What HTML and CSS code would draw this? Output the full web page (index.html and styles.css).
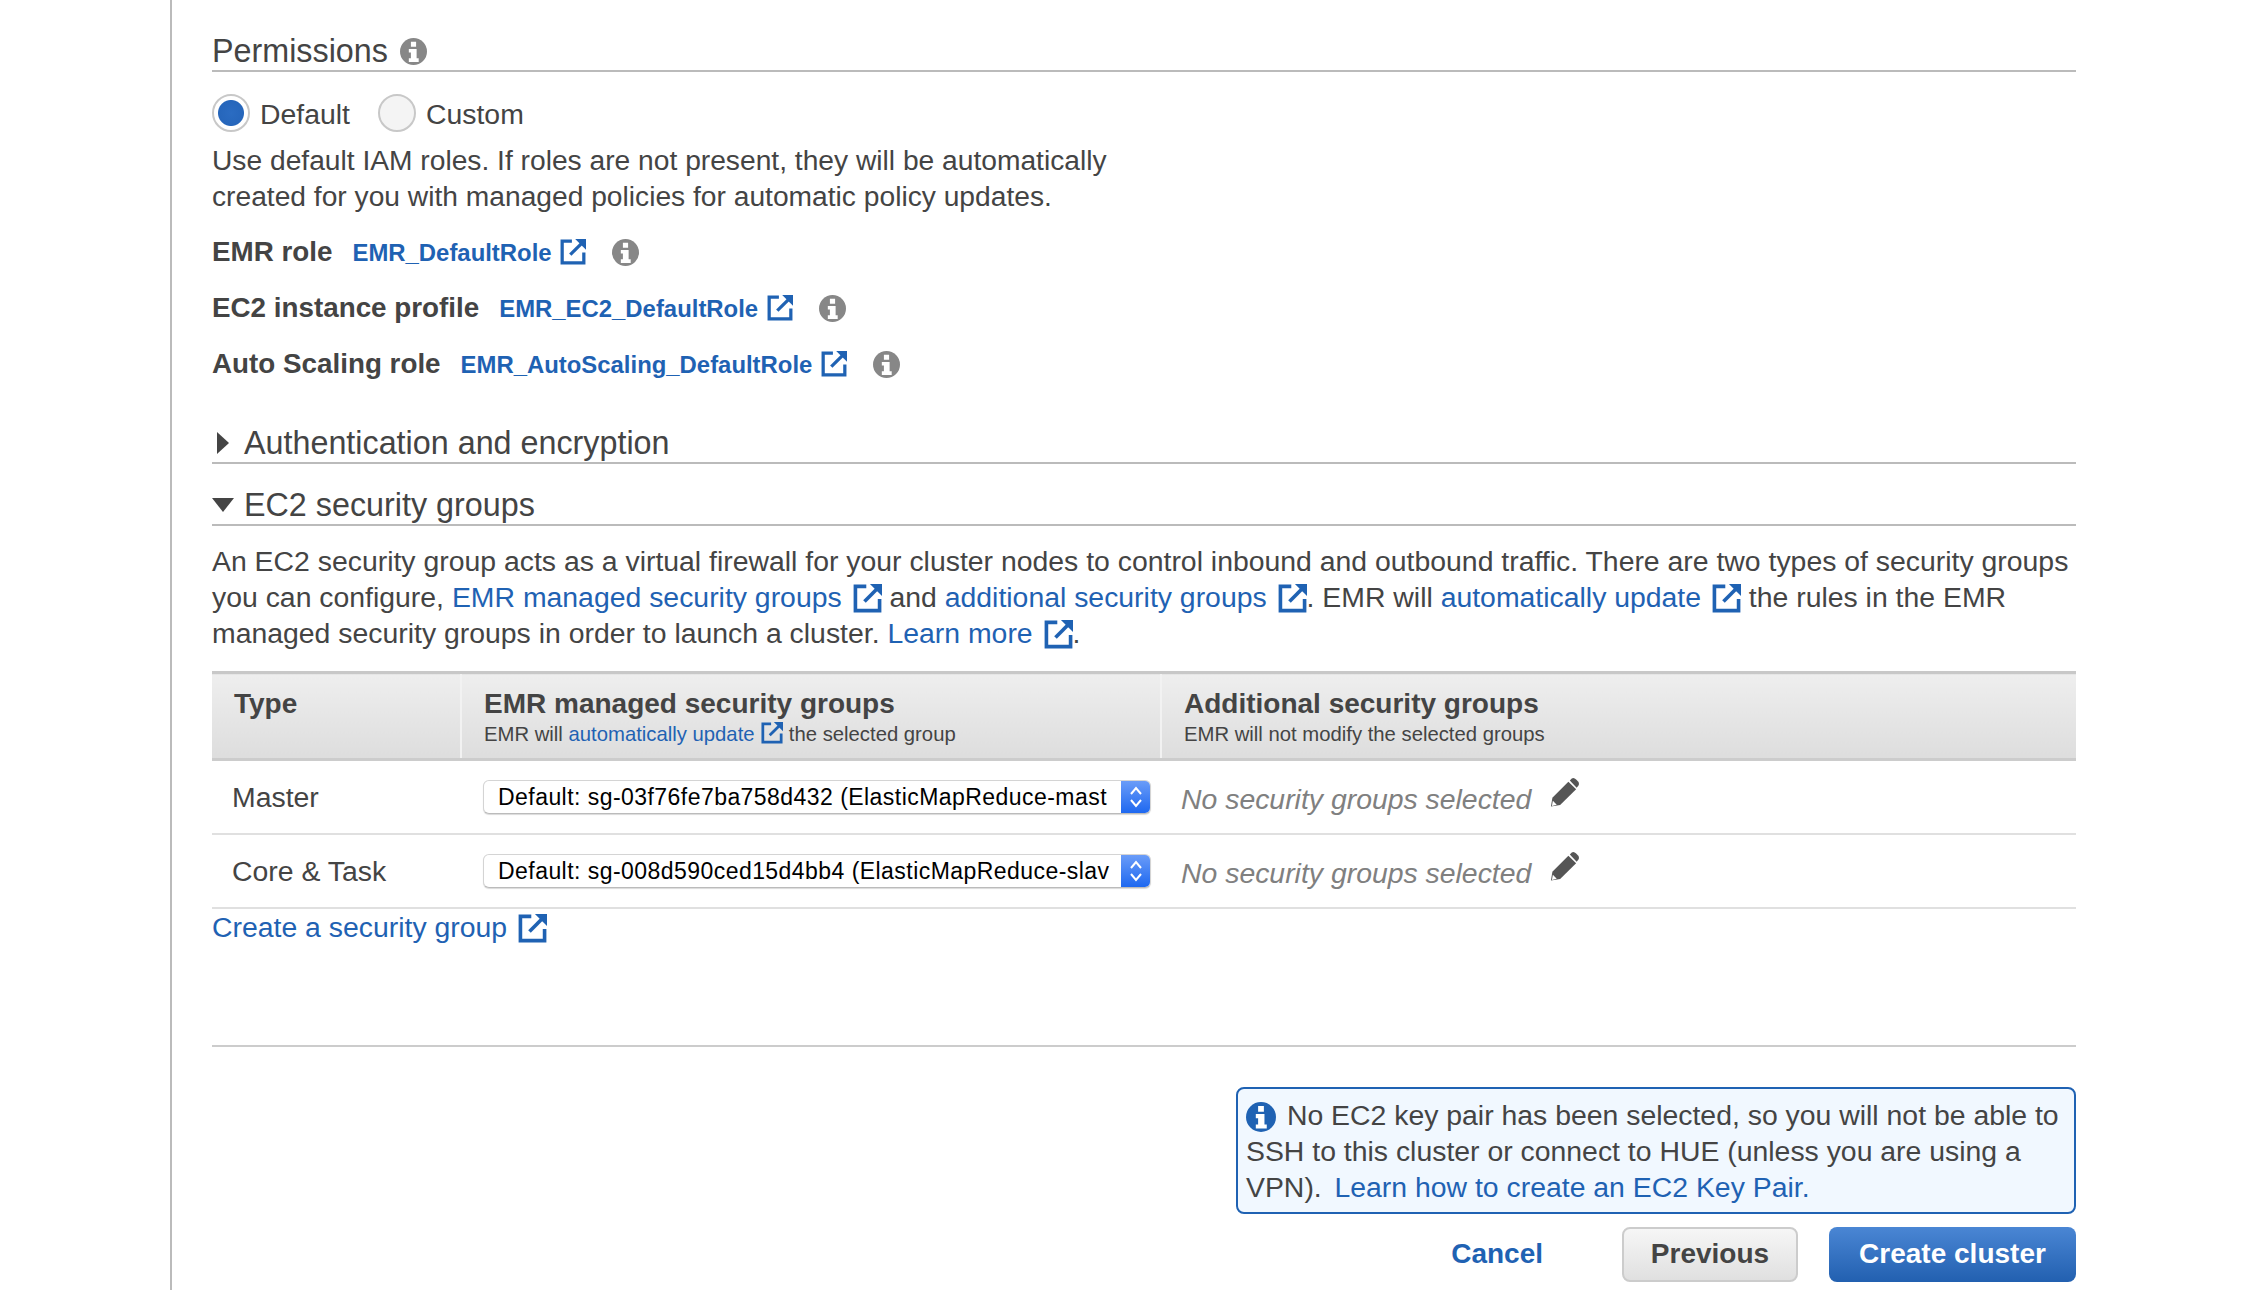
FILE: index.html
```html
<!DOCTYPE html>
<html lang="en">
<head>
    <meta charset="UTF-8">
    <title>Create Cluster - Security</title>
    <link rel="stylesheet" href="styles.css">
</head>
<body>
    <svg class="defs" width="0" height="0">
        <symbol id="info" viewBox="0 0 26 26">
            <circle cx="13" cy="13" r="13" fill="currentColor"/>
            <path d="M10.5 3.500h5v5h-5zM8.500 10.500h7.500v9h2v3.500h-9.500v-3.500h2v-5.500h-2z" fill="#fff"/>
        </symbol>
        <symbol id="ext" viewBox="0 0 24 24">
            <path d="M11 2H2v20h20V12.500" fill="none" stroke="currentColor" stroke-width="3"/>
            <path d="M9.500 14.500L20 4" fill="none" stroke="currentColor" stroke-width="3"/>
            <path d="M14 0h10v10z" fill="currentColor"/>
        </symbol>
        <symbol id="pencil" viewBox="0 0 32 32">
            <path d="M2 30l1.500-9L20 4.500l8 7.500L11.500 28.500z" fill="currentColor"/>
            <path d="M21.500 3l2-2c1.500-1 3-.5 4.500 1l2 2c1.200 1.500 1.200 3 .3 4.500l-1.800 2z" fill="currentColor"/>
            <path d="M4 24l4 4-5 1.500z" fill="#fff"/>
        </symbol>
    </svg>

    <div class="page">
        <h3 class="section">Permissions <svg class="info"><use href="#info"/></svg></h3>

        <div class="radios">
            <span class="radio on"></span><label>Default</label>
            <span class="radio"></span><label>Custom</label>
        </div>
        <p class="desc">Use default IAM roles. If roles are not present, they will be automatically<br>created for you with managed policies for automatic policy updates.</p>

        <div class="role first">
            <b>EMR role</b>
            <a href="#">EMR_DefaultRole <svg class="ext"><use href="#ext"/></svg></a>
            <svg class="info"><use href="#info"/></svg>
        </div>
        <div class="role">
            <b>EC2 instance profile</b>
            <a href="#">EMR_EC2_DefaultRole <svg class="ext"><use href="#ext"/></svg></a>
            <svg class="info"><use href="#info"/></svg>
        </div>
        <div class="role">
            <b>Auto Scaling role</b>
            <a href="#">EMR_AutoScaling_DefaultRole <svg class="ext"><use href="#ext"/></svg></a>
            <svg class="info"><use href="#info"/></svg>
        </div>

        <h3 class="section auth"><span class="tri-right"></span>Authentication and encryption</h3>
        <h3 class="section groups"><span class="tri-down"></span>EC2 security groups</h3>

        <p class="intro">An EC2 security group acts as a virtual firewall for your cluster nodes to control inbound and outbound traffic. There are two types of security groups<br>
        you can configure, <a href="#">EMR managed security groups <svg class="ext big"><use href="#ext"/></svg></a> and <a href="#">additional security groups <svg class="ext big"><use href="#ext"/></svg></a>. EMR will <a href="#">automatically update <svg class="ext big"><use href="#ext"/></svg></a> the rules in the EMR<br>
        managed security groups in order to launch a cluster. <a href="#">Learn more <svg class="ext big"><use href="#ext"/></svg></a>.</p>

        <table class="sg-table">
            <thead>
                <tr>
                    <th class="col-type"><b>Type</b></th>
                    <th class="col-emr"><b>EMR managed security groups</b><small>EMR will <a href="#">automatically update <svg class="ext small-ext"><use href="#ext"/></svg></a> the selected group</small></th>
                    <th><b>Additional security groups</b><small>EMR will not modify the selected groups</small></th>
                </tr>
            </thead>
            <tbody>
                <tr>
                    <td class="col-type">Master</td>
                    <td class="col-emr">
                        <div class="select"><span class="select-text">Default: sg-03f76fe7ba758d432 (ElasticMapReduce-mast</span><span class="spinner"><svg width="14" height="24" viewBox="0 0 14 24"><path d="M2 9l5-6 5 6M2 15l5 6 5-6" fill="none" stroke="#fff" stroke-width="2"/></svg></span></div>
                    </td>
                    <td class="none"><i>No security groups selected</i><svg class="pencil"><use href="#pencil"/></svg></td>
                </tr>
                <tr>
                    <td class="col-type">Core &amp; Task</td>
                    <td class="col-emr">
                        <div class="select"><span class="select-text">Default: sg-008d590ced15d4bb4 (ElasticMapReduce-slav</span><span class="spinner"><svg width="14" height="24" viewBox="0 0 14 24"><path d="M2 9l5-6 5 6M2 15l5 6 5-6" fill="none" stroke="#fff" stroke-width="2"/></svg></span></div>
                    </td>
                    <td class="none"><i>No security groups selected</i><svg class="pencil"><use href="#pencil"/></svg></td>
                </tr>
            </tbody>
        </table>

        <a class="create-link" href="#">Create a security group <svg class="ext big"><use href="#ext"/></svg></a>

        <hr class="divider">

        <div class="footer">
            <div class="alert"><svg class="alert-icon"><use href="#info"/></svg> No EC2 key pair has been selected, so you will not be able to SSH to this cluster or connect to HUE (unless you are using a VPN).&nbsp; <a class="alert-link" href="#">Learn how to create an EC2 Key Pair.</a></div>
            <div class="buttons">
                <a class="cancel" href="#">Cancel</a>
                <button class="btn">Previous</button>
                <button class="btn primary">Create cluster</button>
            </div>
        </div>
    </div>
</body>
</html>
```

FILE: styles.css
```css
body { margin: 0; background: #fff; color: #444; font-family: "Liberation Sans", Arial, sans-serif; font-size: 28.4px; line-height: 36px; overflow: hidden; }
a { color: #1f62b3; text-decoration: none; }
p { margin: 0; }
.defs { position: absolute; }
.page { margin-left: 170px; border-left: 2px solid #bbb; padding: 32px 0 0 40px; width: 1864px; height: 1258px; }

.section { margin: 0; font-size: 32.3px; line-height: 38px; font-weight: normal; border-bottom: 2px solid #bbb; display: flex; align-items: center; }
.section .info { margin-left: 12px; }
.auth { margin-top: 42px; }
.groups { margin-top: 22px; }
.tri-right { width: 0; height: 0; border-left: 12px solid #444; border-top: 11px solid transparent; border-bottom: 11px solid transparent; margin: 0 15px 0 5px; }
.tri-down { width: 0; height: 0; border-top: 14px solid #444; border-left: 11px solid transparent; border-right: 11px solid transparent; margin: 0 10px 0 0; }

.info { width: 27px; height: 27px; color: #878787; flex: none; }
.ext { width: 26px; height: 26px; vertical-align: -4px; margin-left: 2px; color: #1f62b3; }
.ext.big { width: 29px; height: 29px; vertical-align: -6px; margin-left: 3px; }
.ext.small-ext { width: 22px; height: 22px; vertical-align: -3px; margin-left: 1px; }

.radios { display: flex; align-items: center; height: 38px; margin-top: 22px; }
.radios label { margin: 2px 28px 0 10px; }
.radio { width: 38px; height: 38px; box-sizing: border-box; border-radius: 50%; border: 2px solid #c8c8c8; background: #f4f4f4; flex: none; }
.radio.on { background: radial-gradient(circle at 50% 50%, #2b6cc2 0, #2666bb 12.500px, #fff 13.500px); }
.desc { margin-top: 10px; font-size: 28.2px; }

.role { display: flex; align-items: center; height: 36px; margin-top: 20px; }
.role b { margin-right: 20px; font-size: 27.800px; }
.role a { font-size: 23.900px; font-weight: bold; margin-right: 26px; padding-top: 2px; }

.intro { margin-top: 17px; }

.sg-table { margin-top: 20px; width: 100%; border-collapse: collapse; table-layout: fixed; }
.sg-table th { height: 87px; padding: 13px 0 0 22px; box-sizing: border-box; vertical-align: top; text-align: left; font-weight: normal; border-top: 3px solid #c8c8c8; border-bottom: 3px solid #ccc; background: linear-gradient(#eee, #ddd); border-left: 2px solid #f2f2f2; }
.sg-table th:first-child { border-left: none; }
.sg-table th b { display: block; font-size: 28px; line-height: 34px; }
.sg-table small { display: block; font-size: 20.300px; line-height: 26px; }
.sg-table td { height: 74px; padding: 0 0 0 20px; border-bottom: 2px solid #e0e0e0; box-sizing: border-box; }
.col-type { width: 249px; }
.col-emr { width: 700px; }
.sg-table td.col-emr { padding-left: 22px; }
.sg-table td.none { padding-left: 20px; color: #808080; }
.pencil { width: 31px; height: 32px; margin-left: 18px; vertical-align: 0; color: #555; }

.select { display: flex; width: 668px; height: 34px; box-sizing: border-box; border: 1px solid #d4d4d4; border-bottom-color: #bbb; border-radius: 6px; background: #fff; overflow: hidden; box-shadow: 0 1px 1px rgba(0,0,0,0.15); }
.select-text { flex: 1; min-width: 0; margin: 0 10px 0 14px; white-space: nowrap; font-size: 23px; line-height: 32px; color: #000; letter-spacing: 0.45px; }
.spinner { width: 29px; flex: none; background: linear-gradient(#6a9cf8, #1e68f0); display: flex; align-items: center; justify-content: center; }

.create-link { display: block; }
.divider { margin: 100px 0 0; border: none; border-top: 2px solid #ccc; }

.footer { display: flex; flex-direction: column; align-items: flex-end; margin-top: 40px; }
.alert { width: 840px; box-sizing: border-box; height: 127px; padding: 8px 8px; border: 2px solid #1f62b3; border-radius: 8px; background: #f1f8ff; }
.alert-icon { width: 30px; height: 30px; vertical-align: -7px; margin-right: 3px; color: #1f62b3; }
.alert-link { margin-left: -3px; }
.buttons { display: flex; align-items: center; margin-top: 13px; }
.cancel { font-size: 28px; font-weight: bold; margin-right: 79px; }
.btn { height: 55px; width: 176px; box-sizing: border-box; border: 2px solid #ccc; border-radius: 8px; font: bold 28px "Liberation Sans", Arial, sans-serif; color: #444; background: linear-gradient(#f6f6f6, #e0e0e0); padding: 0; }
.btn.primary { width: 247px; margin-left: 31px; color: #fff; border: none; background: linear-gradient(#4a86d4, #2260b0); }
```
